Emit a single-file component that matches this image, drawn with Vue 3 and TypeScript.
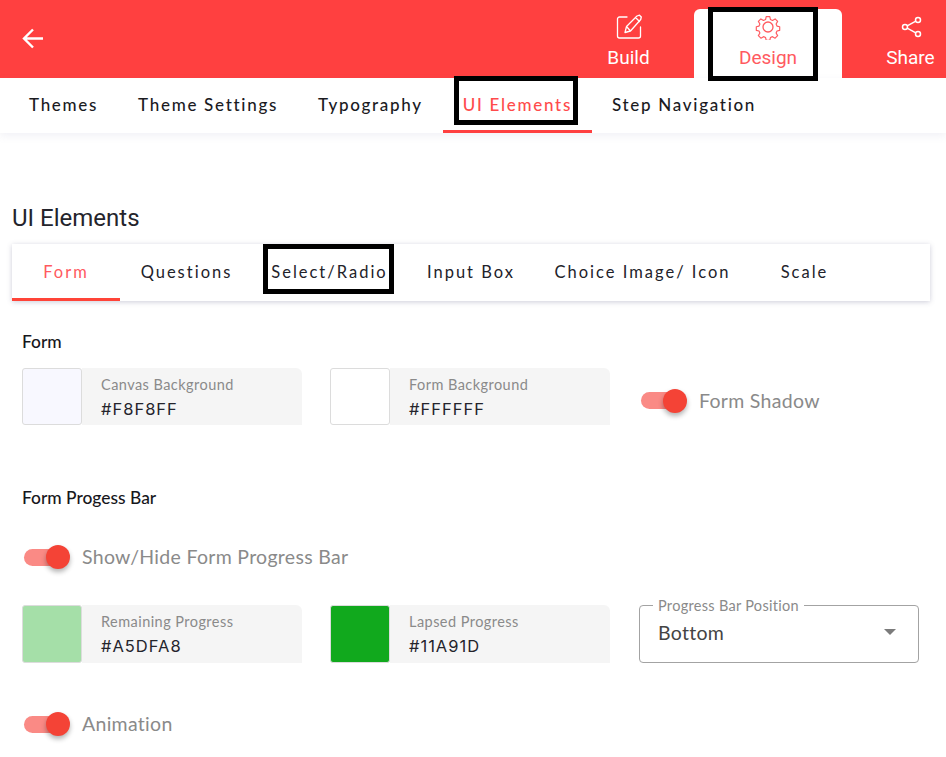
<script setup lang="ts">
interface Field { label: string; value: string; color: string }
const subnav = ['Themes', 'Theme Settings', 'Typography', 'UI Elements', 'Step Navigation']
const tabs = [
  { name: 'Form', width: 108 },
  { name: 'Questions', width: 133 },
  { name: 'Select/Radio', width: 153 },
  { name: 'Input Box', width: 130 },
  { name: 'Choice Image/ Icon', width: 213 },
  { name: 'Scale', width: 111 },
]
const formFields: Field[] = [
  { label: 'Canvas Background', value: '#F8F8FF', color: '#F8F8FF' },
  { label: 'Form Background', value: '#FFFFFF', color: '#FFFFFF' },
]
const progressFields: Field[] = [
  { label: 'Remaining Progress', value: '#A5DFA8', color: '#A5DFA8' },
  { label: 'Lapsed Progress', value: '#11A91D', color: '#11A91D' },
]
</script>

<template>
  <div class="page">
    <header class="topbar">
      <svg class="back" width="24" height="24" viewBox="0 0 24 24" fill="none" stroke="#fff" stroke-width="2.4">
        <path d="M22 11.500H3M12 2.500l-9 9 9 9" />
      </svg>
      <nav class="modes">
        <div class="mode build">
          <svg width="28" height="28" viewBox="0 0 28 28" fill="none" stroke="#fff" stroke-width="1.3" stroke-linejoin="round" stroke-linecap="round">
            <path d="M12 4H4.500A2 2 0 0 0 2.500 6v17a2 2 0 0 0 2 2h19a2 2 0 0 0 2-2V14" />
            <path d="M10 19.500l1.500-6L22 3l2.500-.8 1.800 1.800-.6 2.500L15.500 18z M11.500 13.500l4 4.500 M20.500 4.500l4 4" />
          </svg>
          <span>Build</span>
        </div>
        <div class="mode design">
          <svg width="26" height="26" viewBox="0 0 26 26" fill="none" stroke="#FF5A5F" stroke-width="1.3" stroke-linejoin="round">
            <circle cx="13" cy="13" r="5" />
            <path d="M11 1.500h4l.7 3.200 2.300 1 2.900-1.700 2.800 2.800-1.700 2.900 1 2.300 3 .7v4l-3 .7-1 2.300 1.700 2.900-2.800 2.800-2.900-1.700-2.300 1-.7 3h-4l-.7-3-2.300-1-2.900 1.700-2.800-2.800 1.700-2.900-1-2.300-3-.7v-4l3-.7 1-2.300-1.700-2.900 2.800-2.800 2.900 1.700 2.300-1z" transform="translate(1.300 1.300) scale(.9)" />
          </svg>
          <span>Design</span>
          <i class="mark mark-design"></i>
        </div>
        <div class="mode share">
          <svg width="22" height="22" viewBox="0 0 22 22" fill="none" stroke="#fff" stroke-width="1.500">
            <circle cx="17" cy="4" r="2.500" />
            <circle cx="17" cy="18" r="2.500" />
            <circle cx="4" cy="11" r="2.500" />
            <path d="M6.200 9.800l8.600-4.600M6.200 12.200l8.600 4.600" />
          </svg>
          <span>Share</span>
        </div>
      </nav>
    </header>

    <nav class="subnav">
      <div v-for="item in subnav" :key="item" class="subitem" :class="{ active: item === 'UI Elements' }">
        {{ item }}
        <i v-if="item === 'UI Elements'" class="mark mark-sub"></i>
      </div>
    </nav>

    <main class="content">
      <h1>UI Elements</h1>
      <div class="tabs">
        <div
          v-for="(tab, i) in tabs"
          :key="tab.name"
          class="tab"
          :class="{ active: i === 0 }"
          :style="{ width: tab.width + 'px' }"
        >
          {{ tab.name }}
          <i v-if="tab.name === 'Select/Radio'" class="mark mark-tab"></i>
        </div>
      </div>

      <section class="form-section">
        <h2>Form</h2>
        <div class="row">
          <div v-for="f in formFields" :key="f.label" class="field">
            <div class="swatch" :style="{ background: f.color }"></div>
            <div class="info">
              <div class="label">{{ f.label }}</div>
              <div class="value">{{ f.value }}</div>
            </div>
          </div>
          <div class="toggle-row inline">
            <span class="toggle"><b></b></span>
            <span class="toggle-label">Form Shadow</span>
          </div>
        </div>
      </section>

      <section class="progress-section">
        <h2>Form Progess Bar</h2>
        <div class="toggle-row standalone first">
          <span class="toggle"><b></b></span>
          <span class="toggle-label">Show/Hide Form Progress Bar</span>
        </div>
        <div class="row short">
          <div v-for="f in progressFields" :key="f.label" class="field">
            <div class="swatch" :style="{ background: f.color }"></div>
            <div class="info">
              <div class="label">{{ f.label }}</div>
              <div class="value">{{ f.value }}</div>
            </div>
          </div>
          <div class="select">
            <span class="legend">Progress Bar Position</span>
            <span class="select-value">Bottom</span>
            <span class="caret"></span>
          </div>
        </div>
        <div class="toggle-row standalone second">
          <span class="toggle"><b></b></span>
          <span class="toggle-label">Animation</span>
        </div>
      </section>
    </main>
  </div>
</template>

<style>
html, body { margin: 0; background: #fff; overflow: hidden; }
</style>

<style scoped>
.page {
  width: 946px;
  height: 757px;
  overflow: hidden;
  background: #fff;
  font-family: Lato, "Open Sans", sans-serif;
}
.topbar {
  height: 78px;
  background: #FF4040;
  display: flex;
  justify-content: space-between;
  align-items: stretch;
  padding-left: 21px;
  box-sizing: border-box;
}
.back { align-self: center; }
.modes { display: flex; align-items: flex-end; }
.mode {
  position: relative;
  height: 69px;
  display: flex;
  flex-direction: column;
  align-items: center;
  justify-content: flex-end;
  box-sizing: border-box;
  padding-bottom: 8.500px;
  font: 400 19px/24px Roboto, sans-serif;
  color: #fff;
}
.mode svg { position: absolute; }
.mode.build { width: 132px; padding-left: 1px; }
.mode.build svg { top: 4px; left: 53px; }
.mode.design { width: 148px; background: #fff; border-radius: 6px 6px 0 0; color: #FF5A5F; }
.mode.design svg { top: 5px; left: 61px; }
.mode.share { width: 104px; padding-left: 33px; }
.mode.share svg { top: 7px; left: 58.500px; }
.mark {
  position: absolute;
  border: 5px solid #000;
  box-sizing: border-box;
  display: block;
  pointer-events: none;
}
.mark-design { left: 14px; top: -2px; width: 110px; height: 74px; }
.subnav {
  height: 55px;
  display: flex;
  padding-left: 9px;
  box-shadow: 0 3px 8px rgba(120, 120, 170, .1);
  position: relative;
  box-sizing: border-box;
}
.subitem {
  position: relative;
  padding: 0 20px;
  height: 55px;
  line-height: 53px;
  font-size: 17px;
  font-weight: 500;
  letter-spacing: 1.700px;
  color: #1b1b1f;
  box-sizing: border-box;
  white-space: nowrap;
}
.subitem.active { color: #FF4B4B; border-bottom: 3px solid #FF4040; }
.mark-sub { left: 11px; top: -2px; width: 124px; height: 49px; }
.content { padding: 0 16px 0 12px; }
h1 {
  margin: 71px 0 0;
  font: 400 24px/28px Roboto, sans-serif;
  color: #24242c;
}
.tabs {
  margin-top: 12px;
  height: 57px;
  width: 918px;
  display: flex;
  background: #fff;
  box-shadow: 0 1px 5px rgba(90, 90, 130, .3);
  box-sizing: border-box;
}
.tab {
  position: relative;
  flex: none;
  height: 57px;
  line-height: 57px;
  text-align: center;
  font-size: 16.500px;
  letter-spacing: 2px;
  color: #22222a;
  box-sizing: border-box;
  white-space: nowrap;
}
.tab.active { color: #FF5A5F; border-bottom: 3px solid #FF4438; }
.mark-tab { left: 10px; top: 0; width: 131px; height: 50px; }
section { padding-left: 10px; }
.form-section { margin-top: 31px; }
.progress-section { margin-top: 63px; }
h2 {
  margin: 0;
  font-size: 17.400px;
  line-height: 20px;
  font-weight: 500;
  color: #17171c;
}
.row { display: flex; margin-top: 16px; align-items: center; }
.field { display: flex; width: 280px; height: 57px; margin-right: 28px; flex: none; }
.row.short .field { height: 58px; }
.swatch {
  width: 60px;
  flex: none;
  border: 1px solid #dcdcdc;
  border-radius: 3px;
  box-sizing: border-box;
}
.info {
  flex: 1;
  background: #F5F5F5;
  border-radius: 0 6px 0 0;
  padding: 8px 0 0 19px;
}
.label { font-size: 14.500px; line-height: 18px; letter-spacing: .45px; color: #8a8a8a; }
.value { font: 400 16.500px/20px Inter, sans-serif; letter-spacing: 1px; color: #24242c; margin-top: 5px; }
.toggle-row { display: flex; align-items: center; }
.toggle-row.inline { margin-left: 3px; height: 57px; padding-top: 8px; box-sizing: border-box; }
.toggle {
  position: relative;
  display: block;
  width: 46px;
  height: 17px;
  flex: none;
}
.toggle::before {
  content: "";
  position: absolute;
  left: 0;
  top: 0;
  width: 40px;
  height: 17px;
  border-radius: 9px;
  background: #FA8A85;
}
.toggle b {
  position: absolute;
  right: 0;
  top: -3.500px;
  width: 24px;
  height: 24px;
  border-radius: 50%;
  background: #F44336;
  box-shadow: 0 3px 5px rgba(0, 0, 0, .3);
}
.toggle-label { margin-left: 12px; font-size: 19.500px; line-height: 24px; color: #8a8a8a; letter-spacing: .3px; white-space: nowrap; }
.standalone { padding-left: 2px; }
.standalone.first { margin-top: 37px; }
.standalone.second { margin-top: 49px; }
.row.short { margin-top: 36px; }
.select {
  position: relative;
  width: 280px;
  height: 58px;
  border: 1px solid #a3a3a3;
  border-radius: 4px;
  box-sizing: border-box;
  margin-left: 1px;
  padding: 0 19px;
  display: flex;
  align-items: center;
  justify-content: space-between;
}
.legend {
  position: absolute;
  left: 13px;
  top: -9px;
  padding: 0 5px;
  background: #fff;
  font-size: 14.500px;
  line-height: 18px;
  letter-spacing: .3px;
  color: #8a8a8a;
  white-space: nowrap;
}
.select-value { font-size: 19.500px; color: #444; letter-spacing: .3px; position: relative; top: -2px; left: -1px; }
.caret {
  width: 0;
  height: 0;
  border-left: 6px solid transparent;
  border-right: 6px solid transparent;
  border-top: 6px solid #7b7b7b;
  margin-right: 3px;
  position: relative;
  top: -2px;
}
</style>
